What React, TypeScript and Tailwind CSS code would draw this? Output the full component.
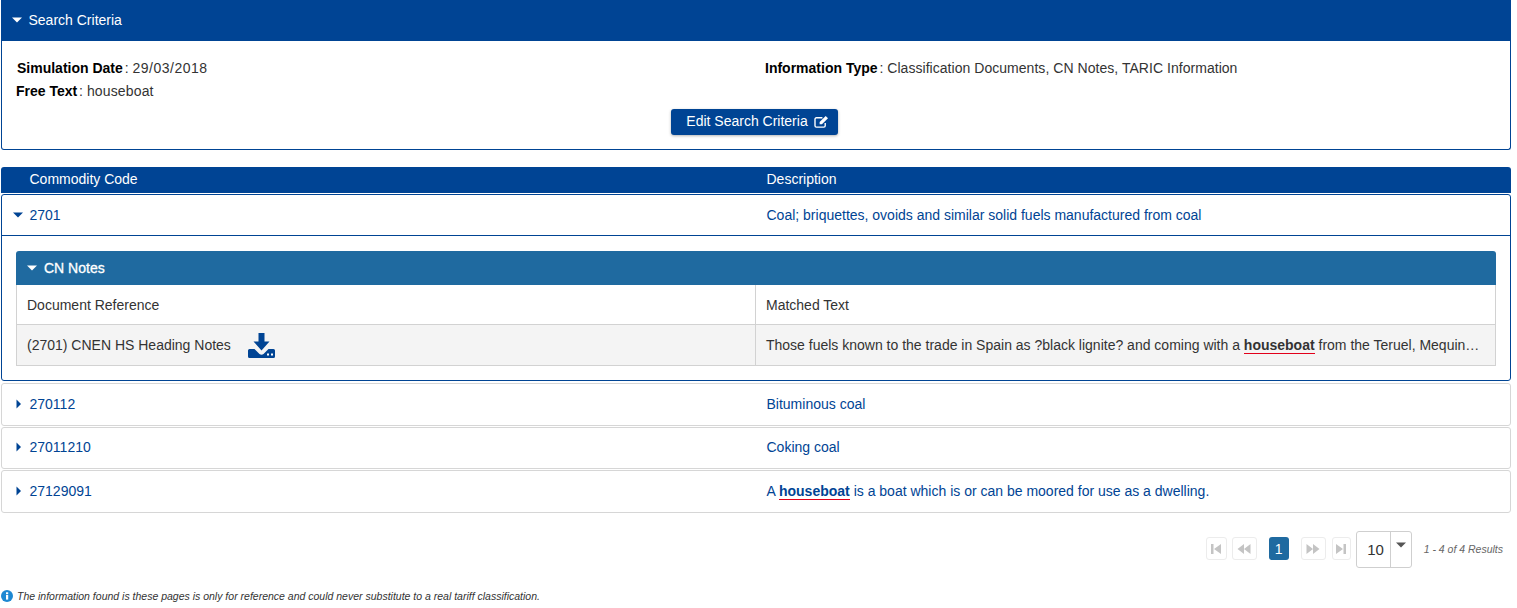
import React from "react";

const BLUE = "bg-[#004494]";

const Caret: React.FC<{ right?: boolean; className?: string }> = ({ right, className }) => (
    <svg viewBox="0 0 10 10" className={`w-[10px] h-[10px] shrink-0 fill-current ${className ?? ""}`}>
        {right ? <path d="M3.5 0.5 L8 5 L3.5 9.5 Z" /> : <path d="M0 2.5 L10 2.5 L5 7.5 Z" />}
    </svg>
);

const EditIcon: React.FC = () => (
    <svg viewBox="0 0 16 14" className="w-[15px] h-[13px] fill-none stroke-white ml-[6px]">
        <path d="M12 8.5 V11.5 A1.5 1.5 0 0 1 10.5 13 H2.5 A1.5 1.5 0 0 1 1 11.5 V4.5 A1.5 1.5 0 0 1 2.5 3 H9" strokeWidth="1.5" />
        <path d="M6 7.5 L12.5 1 L15 3.5 L8.5 10 H6 Z" fill="white" stroke="none" />
    </svg>
);

const DownloadIcon: React.FC = () => (
    <svg viewBox="0 0 27 25" className="w-[27px] h-[25px] fill-[#004494]">
        <path d="M10.5 0 H16.5 V8.5 H21.5 L13.5 17.5 L5.5 8.5 H10.5 Z" />
        <path d="M1.5 16 H6.5 L11.5 21 Q13.5 22.5 15.5 21 L20.5 16 H25.5 Q27 16 27 17.5 V23.5 Q27 25 25.5 25 H1.5 Q0 25 0 23.5 V17.5 Q0 16 1.5 16 Z" />
        <rect x="19" y="20.5" width="2" height="2" fill="white" />
        <rect x="23" y="20.5" width="2" height="2" fill="white" />
    </svg>
);

const PageButton: React.FC<{ d: string; className: string }> = ({ d, className }) => (
    <div className={`h-[23px] mb-[2px] border border-[#ececec] rounded-[3px] flex items-center justify-center ${className}`}>
        <svg viewBox="0 0 14 12" className="w-[14px] h-[12px] fill-[#c4c4c4]"><path d={d} /></svg>
    </div>
);

const Mark: React.FC = () => (
    <b className="border-b border-[#e2001a] leading-[16px] inline-block">houseboat</b>
);

const Row: React.FC<{ code: string; className?: string; children: React.ReactNode }> = ({ code, className, children }) => (
    <div className={`h-[42.5px] mb-px border border-[#d6d6d6] rounded-[3px] flex items-center text-[#004494] ${className ?? ""}`}>
        <Caret right className="ml-[11px] mr-[6.5px]" />
        <div className="w-[737px]">{code}</div>
        <div>{children}</div>
    </div>
);

export default function App() {
    return (
        <div className="h-[608px] overflow-hidden bg-white pl-px pr-[6px] text-[14px] leading-[20px] text-[#333] font-['Liberation_Sans',Arial,sans-serif]">
            <section className="h-[150px] border border-[#004494] border-t-0 rounded-b-[3px]">
                <div className={`h-[41px] -mx-px ${BLUE} text-white flex items-center pl-[11px] pb-[2px]`}>
                    <Caret className="mr-[6.5px]" />
                    <span>Search Criteria</span>
                </div>
                <div className="flex pt-[17px] pl-[15px]">
                    <div className="w-[748px]">
                        <b className="text-black">Simulation Date</b> <span className="-ml-[2px]">: <span className="tracking-[0.5px]">29/03/2018</span></span>
                    </div>
                    <div><b className="text-black">Information Type</b> <span className="-ml-[2px] tracking-[0.04px]">: Classification Documents, CN Notes, TARIC Information</span></div>
                </div>
                <div className="pl-[14px] mt-[3px]"><b className="text-black">Free Text</b> <span className="-ml-[2px]">: <span className="tracking-[0.15px]">houseboat</span></span></div>
                <div className="flex justify-center mt-[8px] pr-[4px]">
                    <button className={`w-[167px] h-[26px] pb-[2px] pl-[7px] ${BLUE} text-white rounded-[3px] shadow-[0_1px_3px_rgba(0,0,0,0.3)] flex items-center justify-center`}>
                        Edit Search Criteria<EditIcon />
                    </button>
                </div>
            </section>

            <div className={`mt-[17px] h-[26px] pb-[2px] ${BLUE} text-white rounded-t-[3px] flex items-center`}>
                <div className="w-[765.5px] pl-[28.5px]">Commodity Code</div>
                <div>Description</div>
            </div>

            <div className="mt-px h-[187px] mb-[2px] border border-[#004494] rounded-[3px]">
                <div className="h-[41px] border-b border-[#004494] flex items-center text-[#004494]">
                    <Caret className="ml-[11px] mr-[6.5px]" />
                    <div className="w-[737px]">2701</div>
                    <div>Coal; briquettes, ovoids and similar solid fuels manufactured from coal</div>
                </div>
                <div className="mx-[14px] mt-[15px]">
                    <div className="h-[34px] bg-[#1f6aa0] text-white rounded-t-[3px] flex items-center pl-[11px]">
                        <Caret className="mr-[7px]" />
                        <span className="[-webkit-text-stroke:0.3px_white]">CN Notes</span>
                    </div>
                    <div className="grid grid-cols-[739px_1fr] border-x border-b border-[#d2d2d2]">
                        <div className="h-[40px] pl-[10px] flex items-center border-r border-b border-[#d2d2d2]">Document Reference</div>
                        <div className="h-[40px] pl-[10px] flex items-center border-b border-[#d2d2d2]">Matched Text</div>
                        <div className="h-[40px] pl-[10px] flex items-center border-r border-[#d2d2d2] bg-[#f4f4f4]">
                            <span className="mr-[17px]">(2701) CNEN HS Heading Notes</span>
                            <DownloadIcon />
                        </div>
                        <div className="h-[40px] pl-[10px] flex items-center bg-[#f4f4f4] whitespace-pre">
                            <span>Those fuels known to the trade in Spain as ?black lignite? and coming with a </span>
                            <Mark />
                            <span> from the Teruel, Mequin…</span>
                        </div>
                    </div>
                </div>
            </div>

            <Row code="270112">Bituminous coal</Row>
            <Row code="27011210" className="pb-[2px]">Coking coal</Row>
            <Row code="27129091">A <Mark /> is a boat which is or can be moored for use as a dwelling.</Row>

            <div className="mt-[18.5px] pr-[8px] flex items-center justify-end">
                <PageButton className="w-[21px] mr-[5px]" d="M2 1 H4.5 V11 H2 Z M12 1 V11 L5 6 Z" />
                <PageButton className="w-[25px] mr-[12px]" d="M7 1 V11 L0.5 6 Z M13.5 1 V11 L7 6 Z" />
                <div className="w-[20px] h-[23px] mb-[2px] rounded-[3px] bg-[#1f6aa0] text-white flex items-center justify-center">1</div>
                <PageButton className="w-[25px] ml-[12px] mr-[6px]" d="M0.5 1 L7 6 L0.5 11 Z M7 1 L13.5 6 L7 11 Z" />
                <PageButton className="w-[19px] mr-[5px]" d="M2 1 L9 6 L2 11 Z M9.5 1 H12 V11 H9.5 Z" />
                <div className="w-[56px] h-[37px] border border-[#cfcfcf] rounded-[3px] flex">
                    <div className="w-[34px] pl-[5px] border-r border-[#cfcfcf] flex items-center justify-center text-[15px] text-[#333]">10</div>
                    <div className="flex-1 pt-[8px] flex justify-center"><Caret className="text-[#555]" /></div>
                </div>
                <div className="ml-[12px] mb-[2px] text-[10.5px] italic text-[#666]">1 - 4 of 4 Results</div>
            </div>

            <div className="mt-[18px] flex items-center text-[10.5px] italic text-[#333]">
                <svg viewBox="0 0 12 12" className="w-[12px] h-[12px] mr-[4px]">
                    <circle cx="6" cy="6" r="6" fill="#1e88d2" />
                    <rect x="5" y="5" width="2.2" height="4.6" fill="white" />
                    <rect x="5" y="2.3" width="2.2" height="1.9" fill="white" />
                </svg>
                The information found is these pages is only for reference and could never substitute to a real tariff classification.
            </div>
        </div>
    );
}
